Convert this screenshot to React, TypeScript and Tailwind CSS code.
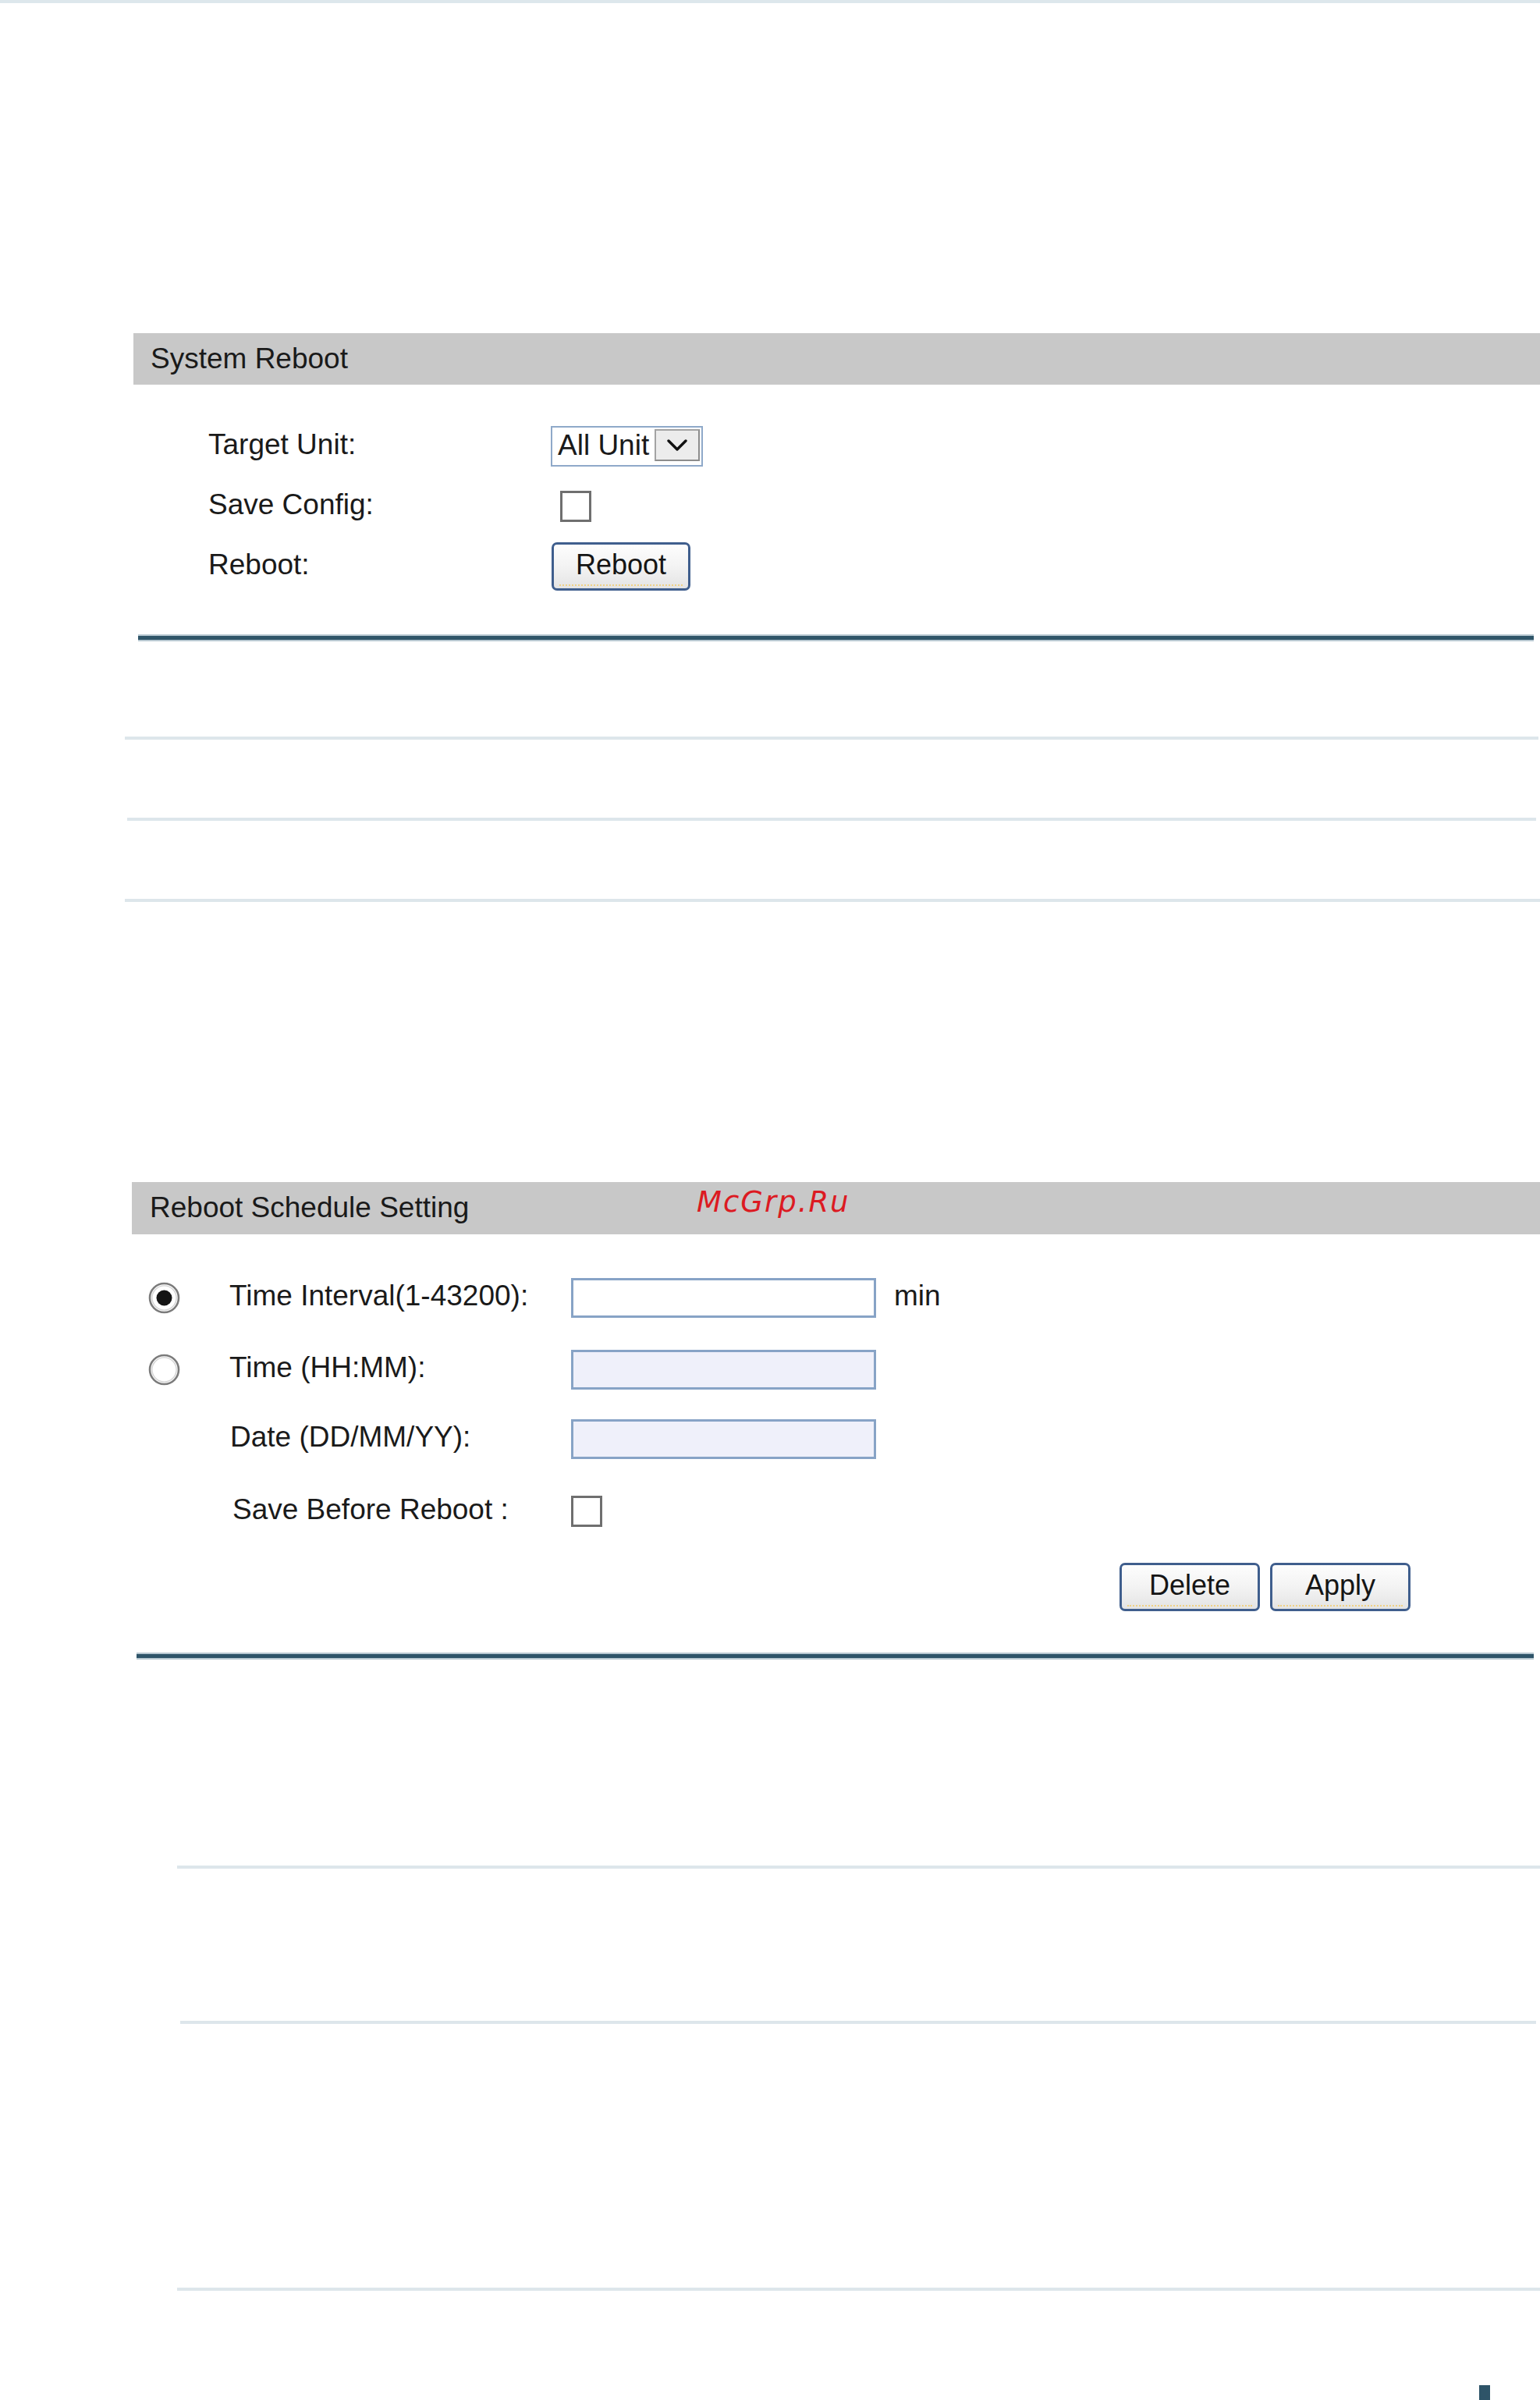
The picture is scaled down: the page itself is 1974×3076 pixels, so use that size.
import React from "react";

function Radio({ checked }: { checked?: boolean }) {
  return (
    <svg width="41" height="41" viewBox="0 0 41 41">
      <circle cx="20.5" cy="20.5" r="18.5" fill="#ffffff" stroke="#7b7b7b" strokeWidth="2.6" />
      <circle cx="20.5" cy="20.5" r="15.6" fill="none" stroke="#d4d4d4" strokeWidth="1.4" />
      {checked && <circle cx="20.5" cy="20.5" r="10" fill="#141414" />}
    </svg>
  );
}

function Checkbox() {
  return <div className="w-[40px] h-[40px] border-[3px] border-[#6f6f6f] bg-white" />;
}

function XpButton({ label, w }: { label: string; w: string }) {
  return (
    <div
      className={`${w} relative h-[62px] border-[3px] border-[#3f5e8d] rounded-[7px] bg-gradient-to-b from-[#fdfdfd] via-[#f3f3f3] to-[#e4e4e4] flex items-center justify-center text-[36px] leading-none text-[#151515]`}
    >
      <span className="pb-[4px]">{label}</span>
      <span className="absolute left-[7px] right-[7px] bottom-[3px] border-t-2 border-dotted border-[#efd184]" />
    </div>
  );
}

function TextInput({ disabled }: { disabled?: boolean }) {
  return (
    <div
      className={`w-[391px] h-[51px] border-[3px] border-[#87a3c6] ${disabled ? "bg-[#eff0fa]" : "bg-white"}`}
    />
  );
}

export default function App() {
  return (
    <div className="w-[1974px] h-[3076px] bg-white relative overflow-hidden text-[#1a1a1a] font-['Liberation_Sans','Arial',sans-serif]">
      <div className="h-[4px] bg-[#dde7ec]" />

      {/* System Reboot */}
      <div className="mt-[423px] ml-[171px] h-[66px] bg-[#c8c8c8] flex items-center pl-[22px] text-[37px] leading-none">
        <span className="pb-[2px]">System Reboot</span>
      </div>

      <div className="ml-[267px] pt-[40px] flex flex-col">
        <div className="h-[77px] flex items-center">
          <div className="w-[439px] text-[37px] leading-none pb-[5px]">Target Unit:</div>
          <div className="w-[195px] h-[52px] border-2 border-[#8fa9c9] bg-white flex items-center justify-between pl-[7px] pr-[2px] pb-[2px]">
            <span className="text-[37px] leading-none">All Unit</span>
            <div className="w-[58px] h-[41px] bg-[#ececec] border-2 border-[#a3a3a3] border-r-[#8c8c8c] border-b-[#8c8c8c] flex items-center justify-center">
              <svg width="26" height="16" viewBox="0 0 26 16">
                <path d="M2 2 L13 13 L24 2" fill="none" stroke="#111" strokeWidth="3.4" strokeLinecap="round" strokeLinejoin="round" />
              </svg>
            </div>
          </div>
        </div>
        <div className="h-[77px] flex items-center">
          <div className="w-[451px] text-[37px] leading-none pb-[5px]">Save Config:</div>
          <Checkbox />
        </div>
        <div className="h-[77px] flex items-center">
          <div className="w-[440px] text-[37px] leading-none pb-[5px]">Reboot:</div>
          <XpButton label="Reboot" w="w-[178px]" />
        </div>
      </div>

      <div className="mt-[49px] ml-[177px] w-[1789px] h-[9px] bg-[#2f5569] border-y-2 border-[#b9c9d2]" />

      <div className="mt-[122px] ml-[160px] w-[1812px] h-[4px] bg-[#dde6eb]" />
      <div className="mt-[100px] ml-[163px] w-[1806px] h-[4px] bg-[#dde6eb]" />
      <div className="mt-[100px] ml-[160px] w-[1814px] h-[4px] bg-[#dde6eb]" />

      {/* Reboot Schedule Setting */}
      <div className="mt-[359px] ml-[169px] h-[67px] bg-[#c8c8c8] relative flex items-center pl-[23px] text-[37px] leading-none">
        <span className="pb-[2px]">Reboot Schedule Setting</span>
        <span className="absolute left-[724px] top-[7px] font-['DejaVu_Sans',sans-serif] italic text-[37px] leading-none tracking-[2px] text-[#dc1a22]">
          McGrp.Ru
        </span>
      </div>

      <div className="ml-[190px] pt-[35px] flex flex-col">
        <div className="h-[92px] flex items-center">
          <div className="w-[104px] flex items-center">
            <Radio checked />
          </div>
          <div className="w-[438px] text-[37px] leading-none pb-[5px]">Time Interval(1-43200):</div>
          <TextInput />
          <span className="ml-[23px] text-[37px] leading-none pb-[5px]">min</span>
        </div>
        <div className="h-[92px] flex items-center">
          <div className="w-[104px] flex items-center">
            <Radio />
          </div>
          <div className="w-[438px] text-[37px] leading-none pb-[5px]">Time (HH:MM):</div>
          <TextInput disabled />
        </div>
        <div className="h-[86px] flex items-center">
          <div className="w-[105px]" />
          <div className="w-[437px] text-[37px] leading-none pb-[5px]">Date (DD/MM/YY):</div>
          <TextInput disabled />
        </div>
        <div className="h-[99px] flex items-center">
          <div className="w-[108px]" />
          <div className="w-[434px] text-[37px] leading-none pb-[5px]">Save Before Reboot :</div>
          <Checkbox />
        </div>
      </div>

      <div className="mt-[17px] ml-[1435px] flex gap-[13px]">
        <XpButton label="Delete" w="w-[180px]" />
        <XpButton label="Apply" w="w-[180px]" />
      </div>

      <div className="mt-[53px] ml-[175px] w-[1791px] h-[9px] bg-[#2f5569] border-y-2 border-[#b9c9d2]" />

      <div className="mt-[264px] ml-[227px] w-[1747px] h-[4px] bg-[#dde6eb]" />
      <div className="mt-[195px] ml-[231px] w-[1738px] h-[4px] bg-[#dde6eb]" />
      <div className="mt-[338px] ml-[227px] w-[1747px] h-[4px] bg-[#dde6eb]" />

      <div className="mt-[121px] ml-[1896px] w-[14px] h-[19px] bg-[#2e5468]" />
    </div>
  );
}
